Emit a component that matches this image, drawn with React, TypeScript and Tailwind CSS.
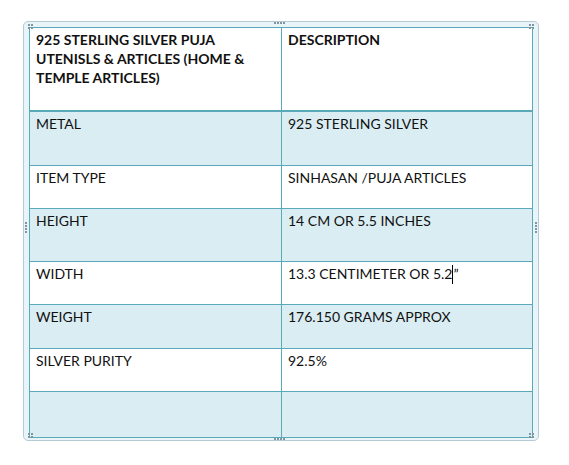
import React from 'react';

interface Row {
  label: string;
  value: React.ReactNode;
  shaded: boolean;
  height: string;
}

const rows: Row[] = [
  { label: 'METAL', value: '925 STERLING SILVER', shaded: true, height: 'h-[54px]' },
  { label: 'ITEM TYPE', value: 'SINHASAN /PUJA ARTICLES', shaded: false, height: 'h-[43px]' },
  { label: 'HEIGHT', value: '14 CM OR 5.5 INCHES', shaded: true, height: 'h-[53px]' },
  {
    label: 'WIDTH',
    value: (
      <>
        13.3 CENTIMETER OR 5.2
        <span className="inline-block w-px h-[19px] bg-black align-[-5px]" />”
      </>
    ),
    shaded: false,
    height: 'h-[43px]',
  },
  { label: 'WEIGHT', value: '176.150 GRAMS APPROX', shaded: true, height: 'h-[44px]' },
  { label: 'SILVER PURITY', value: '92.5%', shaded: false, height: 'h-[43px]' },
  { label: '', value: '', shaded: true, height: 'h-[45px]' },
];

// little grab-handle dots that Word draws on a text box frame
function Dots({ vertical = false }: { vertical?: boolean }) {
  return (
    <div className={vertical ? 'flex flex-col gap-[1px]' : 'flex gap-[1px]'}>
      {[0, 1, 2, 3].map(i => (
        <span key={i} className="w-[2px] h-[2px] bg-[#7f95a0]" />
      ))}
    </div>
  );
}

function Corner() {
  return (
    <div className="grid grid-cols-2 gap-[1px]">
      {[0, 1, 2, 3].map(i => (
        <span key={i} className="w-[2px] h-[2px] bg-[#7f95a0]" />
      ))}
    </div>
  );
}

export default function App() {
  return (
    <div
      className="w-[569px] h-[465px] bg-white pt-[21px] pl-[23px]"
      style={{ fontFamily: 'Lato, "Open Sans", sans-serif' }}
    >
      <div className="relative w-[516px] h-[420px] rounded-[5px] border border-[#b6cad4] bg-[#e9f4f8] p-[5px]">
        <div className="absolute left-[4px] top-[2px]"><Corner /></div>
        <div className="absolute right-[4px] top-[2px]"><Corner /></div>
        <div className="absolute left-[4px] bottom-[2px]"><Corner /></div>
        <div className="absolute right-[4px] bottom-[2px]"><Corner /></div>
        <div className="absolute left-[250px] top-[0px]"><Dots /></div>
        <div className="absolute left-[250px] bottom-[0px]"><Dots /></div>
        <div className="absolute left-[1px] top-[200px]"><Dots vertical /></div>
        <div className="absolute right-[1px] top-[200px]"><Dots vertical /></div>

        <div className="w-[504px] border border-[#5aa9ba] bg-white text-[14px] leading-[19px] text-[#111]">
          <div className="flex h-[84px] border-b-2 border-[#5aa9ba]">
            <div className="w-[252px] border-r border-[#5aa9ba] pl-[6px] pt-[2px] font-bold">
              925 STERLING SILVER PUJA
              <br />
              UTENISLS &amp; ARTICLES (HOME &amp;
              <br />
              TEMPLE ARTICLES)
            </div>
            <div className="flex-1 pl-[6px] pt-[2px] font-bold">DESCRIPTION</div>
          </div>
          {rows.map((r, i) => (
            <div
              key={i}
              className={`flex ${r.height} ${i < rows.length - 1 ? 'border-b border-[#5aa9ba]' : ''} ${
                r.shaded ? 'bg-[#daedf3]' : 'bg-white'
              }`}
            >
              <div className="w-[252px] border-r border-[#5aa9ba] pl-[6px] pt-[2px]">{r.label}</div>
              <div className="flex-1 pl-[6px] pt-[2px]">{r.value}</div>
            </div>
          ))}
        </div>
      </div>
    </div>
  );
}
